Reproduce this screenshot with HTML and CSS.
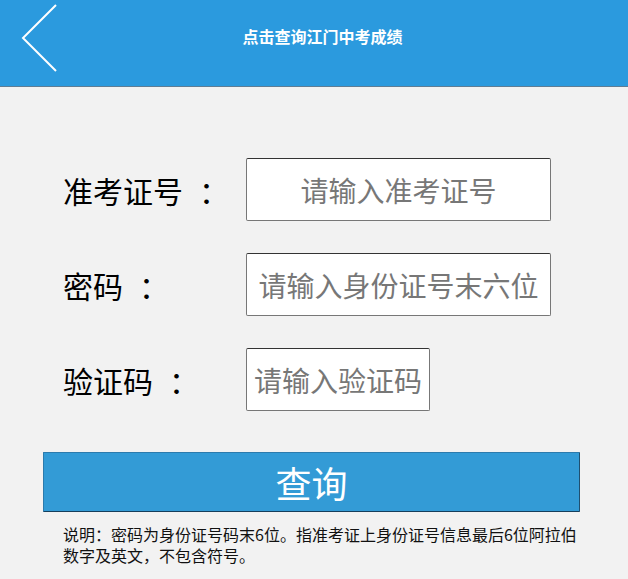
FILE: index.html
```html
<!DOCTYPE html>
<html lang="zh-CN">
<head>
<meta charset="utf-8">
<title>点击查询江门中考成绩</title>
<link rel="stylesheet" href="styles.css">
</head>
<body>
<header class="topbar">
  <a class="back" href="#" aria-label="返回">
    <svg width="40" height="70" viewBox="0 0 40 70">
      <polyline points="35,2 2,35 35,68" fill="none" stroke="#ffffff" stroke-width="2"/>
    </svg>
  </a>
  <h1 class="title">点击查询江门中考成绩</h1>
</header>
<main class="form">
  <div class="row">
    <label class="label">准考证号<span class="colon">：</span></label>
    <input class="field field-wide" type="text" placeholder="请输入准考证号">
  </div>
  <div class="row">
    <label class="label">密码<span class="colon">：</span></label>
    <input class="field field-wide" type="text" placeholder="请输入身份证号末六位">
  </div>
  <div class="row">
    <label class="label">验证码<span class="colon">：</span></label>
    <input class="field field-short" type="text" placeholder="请输入验证码">
  </div>
  <button class="submit" type="button">查询</button>
  <p class="note">说明：密码为身份证号码末6位。指准考证上身份证号信息最后6位阿拉伯数字及英文，不包含符号。</p>
</main>
</body>
</html>
```

FILE: styles.css
```css
html, body {
  margin: 0;
  padding: 0;
}
body {
  background: #f2f2f2;
  font-family: "Microsoft YaHei", "Noto Sans CJK SC", "Noto Sans", sans-serif;
  width: 628px;
  height: 579px;
  overflow: hidden;
}
.topbar {
  height: 86px;
  background: #2b9ade;
  border-bottom: 1px solid #5f7d94;
  display: flex;
  align-items: flex-start;
}
.back {
  display: block;
  width: 40px;
  height: 70px;
  margin-left: 21px;
  margin-top: 3px;
}
.back svg {
  display: block;
}
.title {
  flex: 1;
  margin: 26px 0 0 -44px;
  text-align: center;
  color: #ffffff;
  font-size: 16px;
  font-weight: bold;
  line-height: 20px;
}
.form {
  padding: 71px 0 0 0;
}
.row {
  display: flex;
  align-items: center;
  height: 63px;
  margin-bottom: 32px;
}
.label {
  width: 183px;
  padding-left: 63px;
  font-size: 30px;
  color: #000;
  line-height: 40px;
  white-space: nowrap;
}
.colon {
  display: inline-block;
  margin-left: 16px;
}
.field {
  box-sizing: border-box;
  height: 63px;
  border: 1px solid #777;
  border-top-color: #333;
  border-radius: 2px;
  background: #fff;
  font-family: inherit;
  font-size: 28px;
  text-align: center;
  padding: 0;
  color: #333;
  outline: none;
}
.field::placeholder {
  color: #777;
}
.field-wide {
  width: 305px;
}
.field-short {
  width: 184px;
}
.submit {
  display: block;
  box-sizing: border-box;
  margin: 41px 0 0 43px;
  width: 537px;
  height: 60px;
  background: #339bd6;
  border: 1px solid #2c7bad;
  border-bottom-color: #163f5c;
  border-right-color: #1f5070;
  border-radius: 1px;
  color: #ffffff;
  font-family: inherit;
  font-size: 36px;
  line-height: 40px;
  padding: 0;
}
.note {
  margin: 12px 0 0 63px;
  width: 522px;
  font-size: 16px;
  line-height: 21px;
  color: #111;
}
```
